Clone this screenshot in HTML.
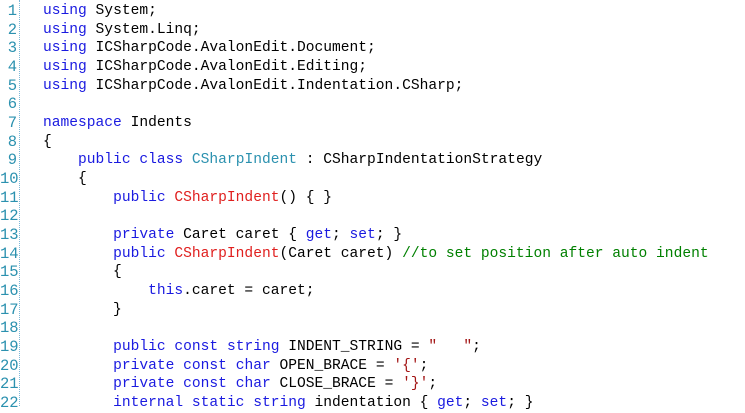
<!DOCTYPE html><html><head><style>
body{margin:0;background:#fff;width:745px;height:406px;overflow:hidden;font-family:"Liberation Mono",monospace;font-size:14.6px;}
.g{position:absolute;left:0;top:2px;width:17px;text-align:right;color:#2b91af;line-height:18.67px;white-space:pre;font-size:15.5px}
.d{position:absolute;left:19px;top:0;height:406px;border-left:1px dotted #7fb8d8}
.c{position:absolute;left:43px;top:2px;line-height:18.67px;white-space:pre;color:#000}
.k{color:#1a1ae0}.t{color:#2b91af}.m{color:#e0201f}.cm{color:#008000}.s{color:#a31515}
</style></head><body>
<div class="g">1
2
3
4
5
6
7
8
9
10
11
12
13
14
15
16
17
18
19
20
21
22</div><div class="d"></div>
<div class="c"><span class="k">using</span> System;
<span class="k">using</span> System.Linq;
<span class="k">using</span> ICSharpCode.AvalonEdit.Document;
<span class="k">using</span> ICSharpCode.AvalonEdit.Editing;
<span class="k">using</span> ICSharpCode.AvalonEdit.Indentation.CSharp;

<span class="k">namespace</span> Indents
{
    <span class="k">public</span> <span class="k">class</span> <span class="t">CSharpIndent</span> : CSharpIndentationStrategy
    {
        <span class="k">public</span> <span class="m">CSharpIndent</span>() { }

        <span class="k">private</span> Caret caret { <span class="k">get</span>; <span class="k">set</span>; }
        <span class="k">public</span> <span class="m">CSharpIndent</span>(Caret caret) <span class="cm">//to set position after auto indent</span>
        {
            <span class="k">this</span>.caret = caret;
        }

        <span class="k">public</span> <span class="k">const</span> <span class="k">string</span> INDENT_STRING = <span class="s">"   "</span>;
        <span class="k">private</span> <span class="k">const</span> <span class="k">char</span> OPEN_BRACE = <span class="s">'{'</span>;
        <span class="k">private</span> <span class="k">const</span> <span class="k">char</span> CLOSE_BRACE = <span class="s">'}'</span>;
        <span class="k">internal</span> <span class="k">static</span> <span class="k">string</span> indentation { <span class="k">get</span>; <span class="k">set</span>; }</div>
</body></html>
